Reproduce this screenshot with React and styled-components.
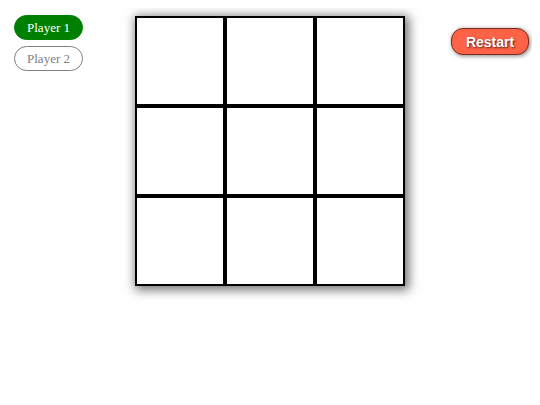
import styled, { createGlobalStyle } from "styled-components";

const Global = createGlobalStyle`
    html, body{
        height: 100%;
    }
    body{
        margin: 8px;
        background: white;
        font-family: "Liberation Serif", "Times New Roman", serif;
    }
`

const Page = styled.div`
    display: flex;
    align-items: flex-start;
    min-height: 380px;
`

const Players = styled.div`
    display: flex;
    flex-direction: column;
    gap: 6px;
    margin: 7px 0 0 6px;
`

const PlayerTag = styled.div`
    width: 69px;
    height: 25px;
    box-sizing: border-box;
    border-radius: 13px;
    display: flex;
    align-items: center;
    justify-content: center;
    font-size: 13px;
    background-color: ${props => props.active ? "green" : "white"};
    color: ${props => props.active ? "white" : "gray"};
    border: 1px solid ${props => props.active ? "green" : "gray"};
`

const Board = styled.div`
    display: grid;
    grid-template-columns: repeat(3, 90px);
    grid-template-rows: repeat(3, 90px);
    margin: 8px 0 0 52px;
    box-shadow: 2px 2px 10px 2px rgba(0, 0, 0, 0.55);
`

const Cell = styled.div`
    box-sizing: border-box;
    border: 2px solid black;
    background: white;
`

const Restart = styled.button`
    margin: 20px 0 0 46px;
    width: 78px;
    height: 27px;
    border-radius: 12px;
    border: 1px solid #7a2a1e;
    background-color: tomato;
    color: white;
    font-family: "Liberation Sans", Arial, sans-serif;
    font-weight: bold;
    font-size: 14px;
    text-shadow: 1px 1px 2px rgba(0, 0, 0, 0.7);
    box-shadow: 1px 1px 4px rgba(0, 0, 0, 0.5);
`

export default function App(){
    const cells = Array.from({length: 9}, (_, i) => i);

    return(
        <Page>
            <Global />
            <Players>
                <PlayerTag active>Player 1</PlayerTag>
                <PlayerTag>Player 2</PlayerTag>
            </Players>
            <Board>
                {cells.map((i) => <Cell key={i} />)}
            </Board>
            <Restart>Restart</Restart>
        </Page>
    )
}
